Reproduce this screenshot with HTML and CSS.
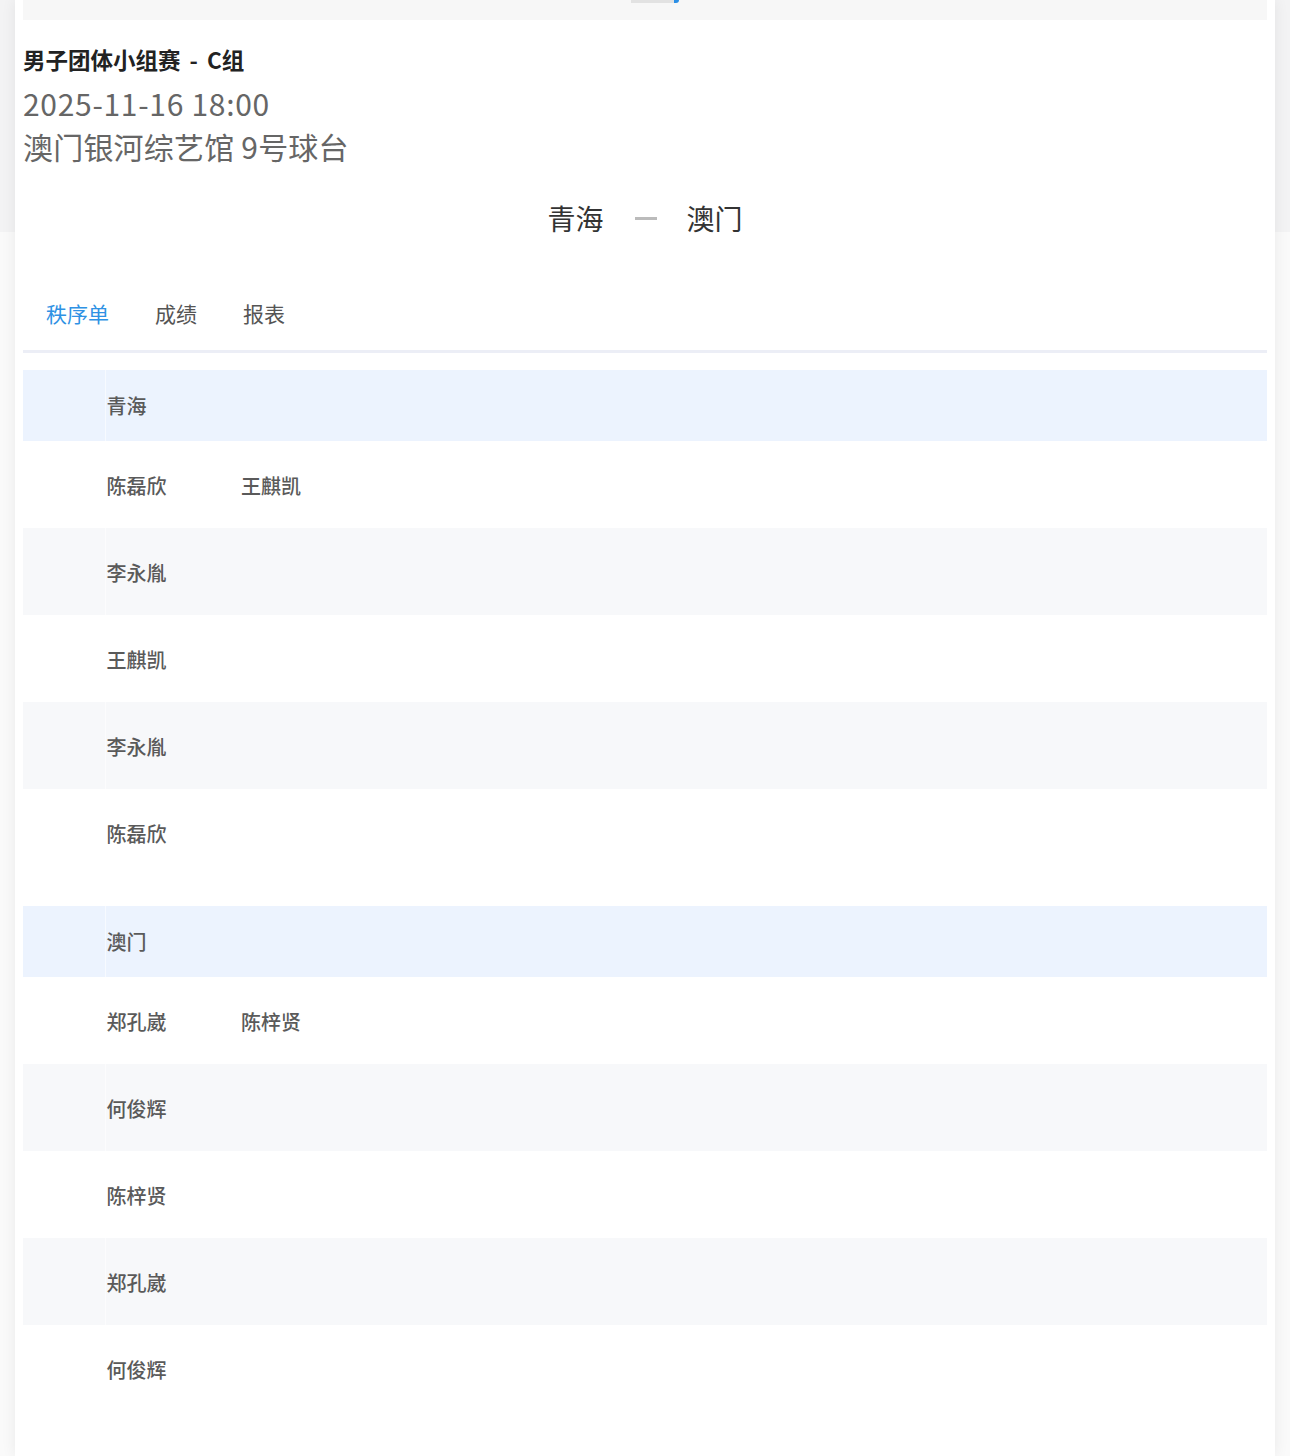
FILE: index.html
```html
<!DOCTYPE html>
<html lang="zh-CN">
<head>
    <meta charset="UTF-8">
    <meta name="viewport" content="width=device-width, initial-scale=1.0">
    <title>男子团体小组赛 - C组</title>
    <link rel="stylesheet" href="styles.css">
</head>
<body>
    <div class="card">
        <div class="topbar">
            <div class="topbar-thumb"></div>
        </div>

        <div class="match-info">
            <div class="match-title">男子团体小组赛 - C组</div>
            <div class="match-time">2025-11-16 18:00</div>
            <div class="match-venue">澳门银河综艺馆 9号球台</div>
        </div>

        <div class="teams">
            <span class="team">青海</span>
            <span class="vs"></span>
            <span class="team">澳门</span>
        </div>

        <div class="tabs">
            <div class="tab active">秩序单</div>
            <div class="tab">成绩</div>
            <div class="tab">报表</div>
        </div>

        <table class="order-table">
            <tr class="team-row">
                <td class="idx"></td>
                <td class="name">青海</td>
                <td></td>
                <td></td>
            </tr>
            <tr>
                <td class="idx"></td>
                <td class="name">陈磊欣</td>
                <td class="name">王麒凯</td>
                <td></td>
            </tr>
            <tr class="alt">
                <td class="idx"></td>
                <td class="name">李永胤</td>
                <td></td>
                <td></td>
            </tr>
            <tr>
                <td class="idx"></td>
                <td class="name">王麒凯</td>
                <td></td>
                <td></td>
            </tr>
            <tr class="alt">
                <td class="idx"></td>
                <td class="name">李永胤</td>
                <td></td>
                <td></td>
            </tr>
            <tr>
                <td class="idx"></td>
                <td class="name">陈磊欣</td>
                <td></td>
                <td></td>
            </tr>
        </table>

        <table class="order-table">
            <tr class="team-row">
                <td class="idx"></td>
                <td class="name">澳门</td>
                <td></td>
                <td></td>
            </tr>
            <tr>
                <td class="idx"></td>
                <td class="name">郑孔崴</td>
                <td class="name">陈梓贤</td>
                <td></td>
            </tr>
            <tr class="alt">
                <td class="idx"></td>
                <td class="name">何俊辉</td>
                <td></td>
                <td></td>
            </tr>
            <tr>
                <td class="idx"></td>
                <td class="name">陈梓贤</td>
                <td></td>
                <td></td>
            </tr>
            <tr class="alt">
                <td class="idx"></td>
                <td class="name">郑孔崴</td>
                <td></td>
                <td></td>
            </tr>
            <tr>
                <td class="idx"></td>
                <td class="name">何俊辉</td>
                <td></td>
                <td></td>
            </tr>
        </table>
    </div>
</body>
</html>
```

FILE: styles.css
```css
* {
    margin: 0;
    padding: 0;
    box-sizing: border-box;
}

body {
    font-family: "Noto Sans CJK SC", "Noto Sans", sans-serif;
    background: linear-gradient(#f3f3f4 0, #f3f3f4 232px, #fafafa 232px);
    color: #333;
}

.card {
    margin: 0 15px;
    min-height: 1456px;
    padding: 0 8px;
    background: #fff;
    box-shadow: 0 0 14px rgba(0, 0, 0, 0.07);
}

.topbar {
    height: 20px;
    background: #f7f7f7;
    display: flex;
    justify-content: center;
}

.topbar-thumb {
    width: 48px;
    height: 3px;
    margin-left: 20px;
    background: #e2e2e2;
    border-right: 5px solid #2b8fe6;
    border-radius: 0 0 3px 0;
}

.match-info {
    padding-top: 24px;
}

.match-title {
    font-size: 22.5px;
    line-height: 30px;
    font-weight: 600;
    word-spacing: 4px;
    color: #222;
    margin-bottom: 8px;
}

.match-time,
.match-venue {
    font-size: 30px;
    line-height: 43px;
    color: #666;
}

.match-time {
    letter-spacing: 0.7px;
}

.match-venue {
    letter-spacing: 0.2px;
}

.teams {
    margin-top: 30px;
    display: flex;
    justify-content: center;
    align-items: center;
    height: 40px;
}

.team {
    font-size: 28px;
    line-height: 40px;
    color: #333;
}

.vs {
    width: 22px;
    height: 3px;
    margin: 0 30px 0 31px;
    background: #bbb;
}

.tabs {
    margin-top: 46px;
    display: flex;
    border-bottom: 3px solid #eceef6;
}

.tab {
    font-size: 21px;
    line-height: 58px;
    padding: 0 23px 8px;
    color: #555;
}

.tab.active {
    color: #2f92e4;
}

.order-table {
    width: 100%;
    border-collapse: collapse;
    margin-top: 17px;
}

.order-table + .order-table {
    margin-top: 30px;
}

.order-table td {
    height: 87px;
    padding: 1px 0 0;
    font-size: 20px;
    font-weight: 500;
    color: #5a5a5a;
}

.order-table td.idx {
    width: 82px;
    border-right: 1px solid rgba(255, 255, 255, 0.6);
}

.order-table td.name {
    width: 135px;
    padding-left: 1px;
}

.order-table .team-row td {
    height: 71px;
    padding-top: 0;
    background: #ecf3fe;
}

.order-table .alt td {
    background: #f7f8fa;
}
```
